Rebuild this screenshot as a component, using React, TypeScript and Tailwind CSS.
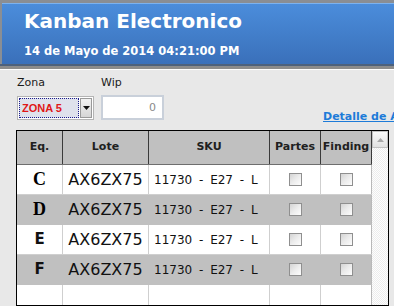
import React from "react";

const rows = [
  { eq: "C", serif: true, grey: false },
  { eq: "D", serif: true, grey: true },
  { eq: "E", serif: false, grey: false },
  { eq: "F", serif: false, grey: true },
];

function Check() {
  return (
    <span className="block w-[13px] h-[13px] border border-[#8f8f8f] bg-gradient-to-br from-[#d4d4d4] via-[#ececec] to-[#fdfdfd]" />
  );
}

export default function App() {
  return (
    <div className="w-[394px] h-[306px] overflow-hidden bg-[#e8e8e8] flex flex-col font-['DejaVu_Sans',sans-serif]">
      {/* top strip + header */}
      <div className="bg-[#8a8e94] pt-[3px] pl-[2px]">
        <div className="h-[61px] border-t border-[#7cb2ee] bg-gradient-to-b from-[#4b8ddb] to-[#3a70ba] pl-[22px] pt-[5px] text-white font-bold">
          <div className="text-[20px] leading-[24px]">Kanban Electronico</div>
          <div className="mt-[11px] text-[11.5px] leading-[14px]">14 de Mayo de 2014 04:21:00 PM</div>
        </div>
        <div className="h-[2px] bg-[#4d617c] -ml-[2px]" />
        <div className="h-[3px] bg-[#8c8c8c] -ml-[2px]" />
      </div>
      <div className="h-[1px] bg-white" />

      {/* panel */}
      <div className="flex-1 flex flex-col pl-[16px] pt-[6px]">
        <div className="flex text-[11px] leading-[13px] text-[#1a1a1a]">
          <span className="w-[85px] pl-[1px]">Zona</span>
          <span>Wip</span>
        </div>
        <div className="flex items-end mt-[6px] h-[25px]">
          {/* select */}
          <div className="ml-[1px] w-[77px] h-[24px] flex border border-[#b4b4b4] bg-white">
            <div className="w-[60px] m-[1px] border border-dotted border-[#1c1c8c] bg-[#dfe2ec] flex items-center pl-[2px]">
              <span className="text-[#e01818] font-bold text-[11px] font-['Liberation_Sans',sans-serif] leading-none">ZONA 5</span>
            </div>
            <div className="flex-1 my-[1px] mr-[1px] bg-gradient-to-b from-[#f2f2f2] to-[#d6d6d6] border border-[#9a9a9a] flex items-center justify-center">
              <svg width="7" height="4" viewBox="0 0 7 4">
                <path d="M0 0 H7 L3.5 4 Z" fill="#111" />
              </svg>
            </div>
          </div>
          {/* wip */}
          <div className="ml-[7px] w-[63px] h-[25px] border-2 border-[#c9d0da] bg-white flex items-center justify-end pr-[6px]">
            <span className="text-[11px] text-[#8a8a8a] leading-none">0</span>
          </div>
          <a className="ml-auto mb-[-3px] whitespace-nowrap overflow-hidden text-[11px] font-bold text-[#1d7bd8] underline leading-[13px] w-[71px]">
            Detalle de Avance
          </a>
        </div>

        {/* table */}
        <div className="mt-[10px] w-[373px] flex-1 flex border border-black bg-white">
          <div className="w-[355px] flex flex-col">
            <div className="flex h-[34px] bg-[#c0c0c0] border-b border-[#6e6e6e] text-[11px] font-bold text-[#202020]">
              <div className="w-[46px] border-r border-[#3a3a3a] flex items-center justify-center">Eq.</div>
              <div className="w-[86px] border-r border-[#3a3a3a] flex items-center justify-center">Lote</div>
              <div className="w-[121px] border-r border-[#3a3a3a] flex items-center justify-center">SKU</div>
              <div className="w-[51px] border-r border-[#3a3a3a] flex items-center justify-center">Partes</div>
              <div className="w-[51px] border-r border-[#3a3a3a] flex items-center justify-center">Finding</div>
            </div>
            {rows.map((r) => (
              <div
                key={r.eq}
                className={`flex h-[30px] border-b ${r.grey ? "bg-[#c0c0c0] border-[#c0c0c0]" : "bg-white border-[#cfcfcf]"}`}
              >
                <div className={`w-[46px] border-r ${r.grey ? "border-[#c0c0c0]" : "border-[#cfcfcf]"} flex items-center justify-center`}>
                  {r.serif ? (
                    <span className="font-['Liberation_Serif',serif] font-bold text-[18px] text-black">{r.eq}</span>
                  ) : (
                    <span className="font-bold text-[15px] text-[#111]">{r.eq}</span>
                  )}
                </div>
                <div className={`w-[86px] border-r ${r.grey ? "border-[#c0c0c0]" : "border-[#cfcfcf]"} flex items-center justify-center text-[16px] text-[#111]`}>
                  AX6ZX75
                </div>
                <div className={`w-[121px] border-r ${r.grey ? "border-[#c0c0c0]" : "border-[#cfcfcf]"} flex items-center pl-[5px] text-[12px] text-[#111] whitespace-pre [word-spacing:3px]`}>
                  11730 - E27 - L
                </div>
                <div className={`w-[51px] border-r ${r.grey ? "border-[#c0c0c0]" : "border-[#cfcfcf]"} flex items-center justify-center`}>
                  <Check />
                </div>
                <div className="w-[51px] border-r border-[#b8b8b8] flex items-center justify-center">
                  <Check />
                </div>
              </div>
            ))}
            <div className="flex flex-1 bg-white">
              <div className="w-[46px] border-r border-[#cfcfcf]" />
              <div className="w-[86px] border-r border-[#cfcfcf]" />
              <div className="w-[121px] border-r border-[#cfcfcf]" />
              <div className="w-[51px] border-r border-[#cfcfcf]" />
              <div className="w-[51px] border-r border-[#b8b8b8]" />
            </div>
          </div>
          {/* scrollbar */}
          <div className="w-[16px] bg-[repeating-conic-gradient(#ececec_0%_25%,#fdfdfd_0%_50%)] bg-size-[2px_2px] flex flex-col">
            <div className="h-[17px] border border-[#c2c2c2] bg-gradient-to-b from-[#fafafa] to-[#e2e2e2] flex items-center justify-center">
              <svg width="7" height="4" viewBox="0 0 7 4">
                <path d="M3.5 0 L7 4 H0 Z" fill="#a8a8a8" />
              </svg>
            </div>
          </div>
        </div>
      </div>
    </div>
  );
}
